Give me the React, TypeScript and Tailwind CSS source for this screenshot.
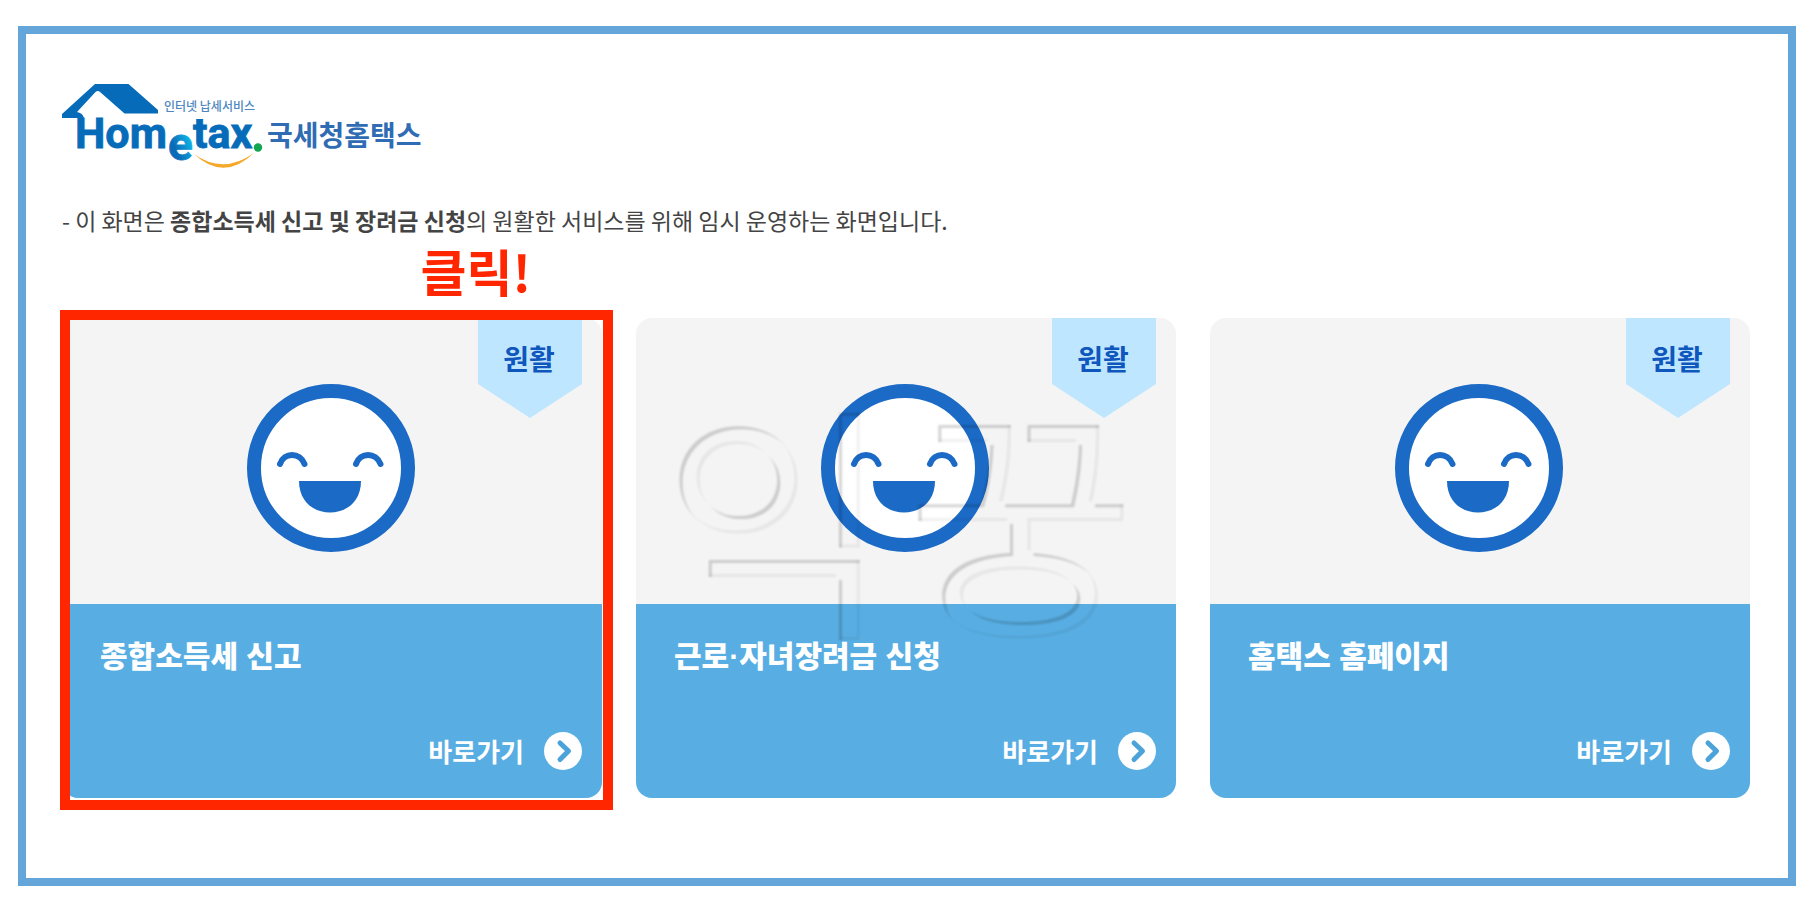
import React from "react";

type Service = { title: string; href: string; highlighted?: boolean; watermark?: boolean };

const services: Service[] = [
  { title: "종합소득세 신고", href: "#income-tax", highlighted: true },
  { title: "근로·자녀장려금 신청", href: "#incentive", watermark: true },
  { title: "홈택스 홈페이지", href: "#home" },
];

function Logo() {
  return (
    <svg viewBox="62 82 362 90" className="h-[90px] w-[362px]" role="img" aria-label="Hometax 국세청홈택스">
      <defs>
        <linearGradient id="e-fill" x1="0" y1="1" x2="1" y2="0">
          <stop offset="0.35" stopColor="#0a6cb8" />
          <stop offset="0.75" stopColor="#10b4e6" />
        </linearGradient>
      </defs>
      <path
        d="M62 114 L95 84 H128.500 L158 110 V113.500 H124.500 L99.500 91.500 Q97.500 90.500 95.500 92 L77 112 Q84 113 84 120 V124 H78 V118 H62 Z"
        fill="#066cb9"
      />
      <g
        fontFamily="Roboto, 'Liberation Sans', sans-serif"
        fontWeight="700"
        fontSize="43"
        fill="#066cb9"
        stroke="#066cb9"
        strokeWidth="0.8"
      >
        <text x="75" y="148">Hom</text>
        <text x="168" y="160" fontSize="46" fill="url(#e-fill)" stroke="url(#e-fill)">e</text>
        <text x="193" y="148">tax</text>
      </g>
      <circle cx="258" cy="147.500" r="4.200" fill="#12a650" />
      <path d="M194 154 Q223 175 254 153 Q224 182 194 154 Z" fill="#f6a828" />
      <g fontFamily="'Noto Sans CJK KR', sans-serif">
        <text x="164" y="111" fontSize="12" fontWeight="500" fill="#4d86c0">인터넷 납세서비스</text>
        <text x="267" y="146" fontSize="28" fontWeight="700" fill="#2f6cb3">국세청홈택스</text>
      </g>
    </svg>
  );
}

function Smile() {
  return (
    <svg viewBox="0 0 168 168" className="size-[168px]" aria-hidden="true">
      <circle cx="84" cy="84" r="77" fill="#fff" stroke="#1b6ac6" strokeWidth="14" />
      <g fill="none" stroke="#1b6ac6" strokeWidth="6" strokeLinecap="round">
        <path d="M33 80 C37 68 53 68 57.500 80" />
        <path d="M109 80 C113 68 129 68 133.500 80" />
      </g>
      <path d="M52 97 H114 C114 117 100 128.500 83 128.500 S52 117 52 97 Z" fill="#1b6ac6" />
    </svg>
  );
}

function Watermark() {
  return (
    <svg viewBox="0 0 540 480" className="pointer-events-none absolute inset-0 size-full" aria-hidden="true">
      <defs>
        <filter id="emboss" x="-5%" y="-5%" width="110%" height="110%">
          <feOffset in="SourceAlpha" dx="3" dy="3" result="down" />
          <feComposite in="SourceAlpha" in2="down" operator="out" result="upperEdge" />
          <feGaussianBlur in="upperEdge" stdDeviation="1" result="upperSoft" />
          <feComponentTransfer in="upperSoft" result="dark">
            <feFuncA type="linear" slope="0.17" />
          </feComponentTransfer>
          <feOffset in="SourceAlpha" dx="-3" dy="-3" result="up" />
          <feComposite in="SourceAlpha" in2="up" operator="out" result="lowerEdge" />
          <feGaussianBlur in="lowerEdge" stdDeviation="1" result="lowerSoft" />
          <feComponentTransfer in="lowerSoft" result="light">
            <feFuncA type="linear" slope="0.06" />
          </feComponentTransfer>
          <feMerge>
            <feMergeNode in="dark" />
            <feMergeNode in="light" />
          </feMerge>
        </filter>
      </defs>
      <text x="26 270" y="302" fontSize="250" fontFamily="'Noto Sans CJK KR', sans-serif" filter="url(#emboss)">
        익꿍
      </text>
    </svg>
  );
}

function Badge() {
  return (
    <span className="absolute top-0 right-5 flex h-[100px] w-[104px] justify-center bg-[#bfe6ff] pt-5 pr-0.5 text-[28px] leading-10 font-bold text-[#0f56bd] [clip-path:polygon(0_0,100%_0,100%_66%,50%_100%,0_66%)]">
      원활
    </span>
  );
}

function ServiceCard({ service }: { service: Service }) {
  return (
    <li className="relative">
      <a href={service.href} className="relative block overflow-hidden rounded-2xl bg-[#f4f4f4]">
        <span className="flex h-[286px] items-center justify-center pt-[14px] pr-0.5">
          <Smile />
        </span>
        <Badge />
        <span className="flex h-[194px] flex-col justify-between bg-[#58aee3] pt-[33px] pr-5 pb-7 pl-[38px] font-bold text-white">
          <span className="font-['Liberation_Sans','Noto_Sans_CJK_KR',sans-serif] text-[30px] leading-10 font-black">
            {service.title}
          </span>
          <span className="flex items-center justify-end gap-5 text-[26px] leading-[36px]">
            바로가기
            <svg viewBox="0 0 38 38" className="size-[38px]" aria-hidden="true">
              <circle cx="19" cy="19" r="19" fill="#fff" />
              <path d="M16 11 L24.500 19 L16 27.500" fill="none" stroke="#4ba3d9" strokeWidth="5" strokeLinecap="round" strokeLinejoin="round" />
            </svg>
          </span>
        </span>
        {service.watermark && <Watermark />}
      </a>
      {service.highlighted && (
        <div className="pointer-events-none absolute -top-2 -right-[11px] -bottom-3 -left-0.5 border-10 border-[#ff2600]">
          <strong className="absolute right-[72px] bottom-full mb-5 text-[50px] leading-[60px] font-bold whitespace-nowrap text-[#ff2600]">
            클릭!
          </strong>
        </div>
      )}
    </li>
  );
}

export default function App() {
  return (
    <div className="bg-white pt-[26px] pr-[14px] pb-5 pl-[18px] font-['Noto_Sans_CJK_KR',sans-serif]">
      <main className="border-8 border-[#64a5da] pt-12 pr-[38px] pb-20 pl-9">
        <h1>
          <Logo />
        </h1>
        <p className="mt-[30px] text-[23px] leading-9 text-[#444]">
          - 이 화면은 <b>종합소득세 신고 및 장려금 신청</b>의 원활한 서비스를 위해 임시 운영하는 화면입니다.
        </p>
        <ul className="mt-20 grid grid-cols-3 gap-[34px]">
          {services.map((service) => (
            <ServiceCard key={service.title} service={service} />
          ))}
        </ul>
      </main>
    </div>
  );
}
